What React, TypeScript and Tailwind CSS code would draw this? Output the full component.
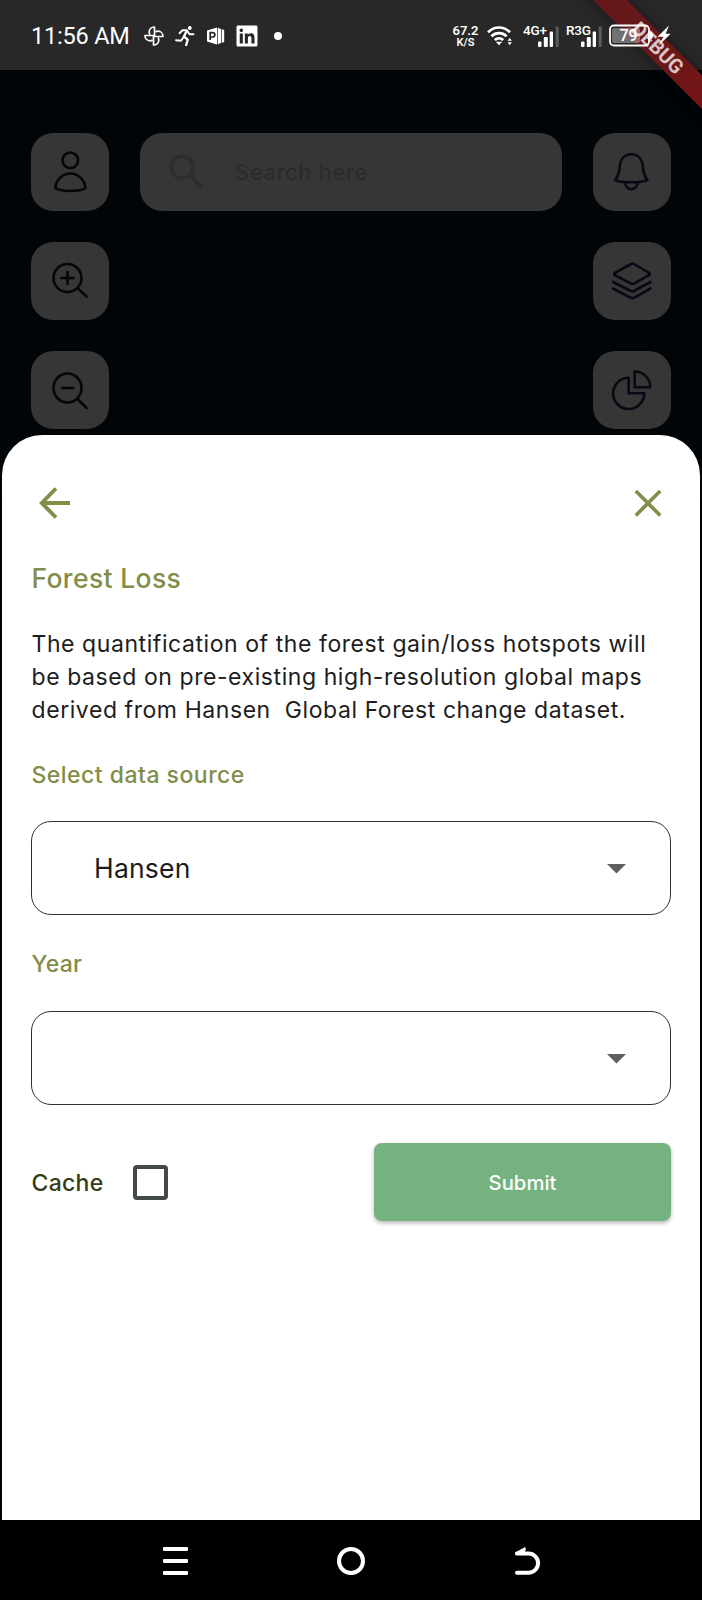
import React from "react";
import { FaLinkedin } from "react-icons/fa";

const INTER = "font-['Inter','Liberation_Sans',sans-serif]";
const ROBOTO = "font-['Roboto','Liberation_Sans',sans-serif]";

function PinwheelIcon() {
  return (
    <svg width="20" height="20" viewBox="0 0 20 20" fill="none" stroke="#fff" strokeWidth="1.700" strokeLinejoin="round">
      <path d="M10.500 10V1C7.500 1 5.200 3.200 5.200 6c0 1 .3 1.900.8 2.600" />
      <path d="M10 10.500h9c0-3-2.200-5.300-5-5.300-1 0-1.900.3-2.600.8" />
      <path d="M9.500 10v9c3 0 5.300-2.200 5.300-5 0-1-.3-1.900-.8-2.600" />
      <path d="M10 9.500H1c0 3 2.200 5.300 5 5.300 1 0 1.900-.3 2.600-.8" />
    </svg>
  );
}

function RunnerIcon() {
  return (
    <svg width="20" height="20" viewBox="0 0 20 20" fill="none" stroke="#fff" strokeWidth="1.900" strokeLinecap="round" strokeLinejoin="round">
      <circle cx="14.800" cy="2" r="1.900" fill="#fff" stroke="none" />
      <path d="M4.500 7.200 7.500 4.300h4.300l2.700 4h4" />
      <path d="M11.800 4.800 8.900 10.500l3.800 3.200-1.500 5.300" strokeWidth="2.300" />
      <path d="M8.300 11.500 6 14.800 1 14.300" />
    </svg>
  );
}

function SlidesIcon() {
  return (
    <svg width="18" height="18" viewBox="0 0 18 18" fill="#fff">
      <path d="M0 3.600 10 .4v17.200L0 14.400z" />
      <path d="M10.700 .8l3.300 1.200v14l-3.300 1.200zM14.700 2.300l2.500.7v12l-2.500.7z" />
      <path d="M3.200 13V5.600h2.300c3.200 0 3.200 4.400 0 4.400H3.400" fill="none" stroke="#282828" strokeWidth="1.700" />
    </svg>
  );
}

function WifiIcon() {
  return (
    <svg width="26" height="21" viewBox="0 0 26 21" fill="none" stroke="#fff" strokeWidth="2.700">
      <path d="M1 7.300C7.500.9 16.500.9 23 7.300" />
      <path d="M4.400 11.200c4.300-4.100 10.900-4.100 15.200 0" />
      <path d="M7.800 14.900c2.400-2.200 6-2.200 8.400 0" />
      <path d="M8.800 16.800h6.400L12 20.300z" fill="#fff" stroke="none" />
      <path d="M20.500 15.700 22.700 12.900 24.900 15.700zM20.500 17.300l2.200 2.900 2.200-2.900z" fill="#fff" stroke="none" />
    </svg>
  );
}

function Signal({ label }: { label: string }) {
  return (
    <div className="relative h-[22px] w-[36px]">
      <span className="absolute -top-[2px] left-0 text-[13.500px] leading-[15px] font-medium tracking-[-0.2px]">{label}</span>
      <svg className="absolute bottom-0 right-0" width="21" height="21" viewBox="0 0 21 21" fill="#fff">
        <rect x="0" y="15.500" width="3.500" height="5.500" rx="1" />
        <rect x="5.800" y="11" width="4" height="10" rx="1" />
        <rect x="11.700" y="5.500" width="3.300" height="15.500" rx="1" />
        <rect x="17.700" y="0.500" width="3" height="20.500" fill="#5c5c5c" />
      </svg>
    </div>
  );
}

function DebugRibbon() {
  return (
    <div className="pointer-events-none absolute right-0 top-0 size-[130px] overflow-hidden">
      <div className={`absolute left-[-14.500px] top-[35.500px] flex h-[23.500px] w-[200px] rotate-45 items-center justify-center bg-linear-to-r from-[#641719] via-[#681719] to-[#7c1414] text-[20px] leading-none font-bold text-white/75 shadow-[0_0_12px_rgba(0,0,0,0.5)] ${ROBOTO}`}>
        DEBUG
      </div>
    </div>
  );
}

function StatusBar() {
  return (
    <header className={`flex h-[70px] items-center justify-between bg-[#282828] pl-[31px] pr-[31px] pt-px text-white ${ROBOTO}`}>
      <div className="flex items-center">
        <span className="w-[113px] text-[23.500px] leading-[28px] tracking-[-0.2px]">11:56 AM</span>
        <PinwheelIcon />
        <span className="ml-[11px]"><RunnerIcon /></span>
        <span className="ml-[12px]"><SlidesIcon /></span>
        <FaLinkedin className="ml-[10px] size-[24px]" />
        <span className="ml-[15px] size-[8px] rounded-full bg-white" />
      </div>
      <DebugRibbon />
      <div className="relative flex items-center">
        <div className="w-[26px] text-center text-[13px] leading-[13px] font-semibold">
          <div>67.2</div>
          <div className="text-[11px] leading-[11px]">K/S</div>
        </div>
        <span className="ml-[8px]"><WifiIcon /></span>
        <div className="ml-[10.500px]"><Signal label="4G+" /></div>
        <div className="ml-[7px]"><Signal label="R3G" /></div>
        <svg className="ml-[6px]" width="63" height="24" viewBox="0 0 63 24">
          <rect x="2" y="1.500" width="39" height="20" rx="4" fill="none" stroke="#fff" strokeWidth="1.800" />
          <rect x="4" y="4" width="28" height="15" rx="2" fill="#fff" fillOpacity="0.350" />
          <path d="M42 7.500c4.200 1 4.200 7 0 8" fill="#fff" />
          <text x="11.500" y="17.300" fontSize="16" fontWeight="500" fill="#fff">79</text>
          <path d="M61 1.500 49.500 12.800h6L50 22 62.700 9.700h-5z" fill="#fff" />
        </svg>
      </div>
    </header>
  );
}

function MapButton({ children }: { children: React.ReactNode }) {
  return (
    <button className="flex size-[78px] shrink-0 items-center justify-center rounded-[22px] bg-[#363636]">
      <svg width="78" height="78" viewBox="0 0 78 78" fill="none" strokeWidth="2.600" strokeLinecap="round" strokeLinejoin="round">
        {children}
      </svg>
    </button>
  );
}

function MapControls() {
  return (
    <section className="flex flex-col gap-[31px] px-[31px] pt-[63px]">
      <div className="flex gap-[31px]">
        <MapButton>
          <g stroke="#060606">
            <circle cx="39.300" cy="27.300" r="7.800" />
            <path d="M24.300 55c1-8.500 7.500-14.500 15-14.500S53.500 46.500 54.500 55c-3 2-9 3-15.200 3s-12-1-15-3z" />
          </g>
        </MapButton>
        <div className="flex h-[78px] flex-1 items-center rounded-[22px] bg-[#363636] text-[#2a2a2a]">
          <svg className="ml-[29px]" width="35" height="36" viewBox="0 0 35 36" fill="none" stroke="#2d2d2d">
            <circle cx="13" cy="13" r="11" strokeWidth="3.200" />
            <path d="M21 21 33 33.500" strokeWidth="4" />
          </svg>
          <span className={`ml-[31px] text-[22px] tracking-[0.65px] ${INTER}`}>Search here</span>
        </div>
        <MapButton>
          <path stroke="#0a0814" d="M22 46.800c2.300-2.300 4-5.800 4.600-11.800.5-9 5-13.700 11.700-13.700S49.500 26 50 35c.6 6 2.200 9.500 4.500 11.800-3 1.600-9.200 2.500-16.200 2.500s-13.300-.9-16.300-2.500zM32 49.200c0 4 2.800 7 6.300 7s6.300-3 6.300-7" />
        </MapButton>
      </div>
      <div className="flex justify-between">
        <MapButton>
          <path stroke="#060606" d="M50.500 36a14 14 0 1 1-28 0 14 14 0 0 1 28 0zM46.500 46l9 8.500M30.500 36h12M36.500 30v12" />
        </MapButton>
        <MapButton>
          <path stroke="#0a0814" d="M38 22 22 30.800q-1.600 1.200 0 2.400L38 41.600q1.500.7 3 0l15-8.400q1.600-1.200 0-2.400L41 22q-1.500-.7-3 0zM20 40 38 49q1.500.7 3 0L57.500 40M20 46.500 38 55.800q1.500.7 3 0L57.500 46.500" />
        </MapButton>
      </div>
      <div className="flex justify-between">
        <MapButton>
          <path stroke="#060606" d="M50.500 37a14 14.500 0 1 1-28 0 14 14.500 0 0 1 28 0zM46.500 48l9 9M31 37h11.500" />
        </MapButton>
        <MapButton>
          <path stroke="#0a0814" d="M35.700 26.800a15.600 15.600 0 1 0 15.600 15.500H35.700zM41.700 20.500v15.700h15.600c0-8.700-7-15.700-15.600-15.700z" />
        </MapButton>
      </div>
    </section>
  );
}

function SelectBox({ value }: { value?: string }) {
  return (
    <div className={`flex h-[94px] items-center justify-between rounded-[20px] border border-[#303030] pl-[62px] pr-[44.500px] pt-[2px] text-[26.500px] tracking-[0.2px] text-[#1b1b1b] ${INTER}`}>
      <span>{value}</span>
      <svg width="19" height="10" viewBox="0 0 19 10" fill="#5f5f5f"><path d="M0 0h19L9.500 9.500z" /></svg>
    </div>
  );
}

function Sheet() {
  return (
    <main className={`absolute inset-x-[2px] top-[435px] flex h-[1085px] flex-col rounded-t-[40px] bg-white px-[29px] pt-[49px] ${INTER}`}>
      <div className="flex h-[38px] items-center justify-between pl-[8px] pr-[9.500px]">
        <svg width="32" height="32" viewBox="0 0 32 32" fill="none" stroke="#818d48" strokeWidth="3.900">
          <path d="M31 16H3M17 1.500 2.800 16 17 30.500" />
        </svg>
        <svg width="28" height="28" viewBox="0 0 28 28" fill="none" stroke="#818d48" strokeWidth="3.600">
          <path d="M1.800 2 26.200 26.400M26.200 2 1.800 26.400" />
        </svg>
      </div>
      <h1 className="mt-[38px] h-[34px] pl-[0.500px] pt-px text-[26.500px] leading-[34px] font-medium tracking-[0.35px] text-[#818d48]">Forest Loss</h1>
      <p className="mt-[34px] h-[99.600px] pl-[0.500px] text-[23px] leading-[33.200px] tracking-[0.570px] whitespace-pre text-[#1d1d1d]">
        {"The quantification of the forest gain/loss hotspots will\nbe based on pre-existing high-resolution global maps\nderived from Hansen  Global Forest change dataset."}
      </p>
      <h2 className="mt-[31.400px] h-[30px] pl-[0.500px] pt-px text-[23px] leading-[30px] font-medium tracking-[0.480px] text-[#818d48]">Select data source</h2>
      <div className="mt-[32px]"><SelectBox value="Hansen" /></div>
      <h2 className="mt-[33px] h-[30px] pl-[0.500px] pt-px text-[23px] leading-[30px] font-medium tracking-[0.2px] text-[#818d48]">Year</h2>
      <div className="mt-[33px]"><SelectBox /></div>
      <div className="mt-[38.500px] flex h-[78px] items-center">
        <span className="w-[102px] pl-[0.500px] pt-[2px] text-[23px] font-medium tracking-[0.3px] text-[#343c14]">Cache</span>
        <span className="size-[35px] rounded-[4px] border-4 border-[#434943]" />
        <button className="ml-auto h-[78px] w-[297px] rounded-[8px] bg-[#74b280] pt-px text-[20.300px] font-medium text-white shadow-[0_2px_4px_rgba(0,0,0,0.3)]">Submit</button>
      </div>
    </main>
  );
}

function NavBar() {
  return (
    <nav className="absolute inset-x-0 bottom-0 flex h-[80px] items-center justify-center gap-[148px] bg-black pt-[2px]">
      <svg width="28" height="28" viewBox="0 0 28 28" fill="#fff">
        <rect x="2" y="0" width="25" height="4" rx="1" />
        <rect x="2" y="12" width="25" height="4" rx="1" />
        <rect x="2" y="24" width="25" height="4" rx="1" />
      </svg>
      <svg width="28" height="28" viewBox="0 0 28 28" fill="none" stroke="#fff" strokeWidth="4">
        <circle cx="14" cy="14" r="12" />
      </svg>
      <svg width="28" height="28" viewBox="0 0 28 28" fill="none" stroke="#fff" strokeWidth="4" strokeLinecap="round">
        <path d="M4 6.500h11.500a9.500 9.500 0 0 1 0 19.200H4" />
        <path d="M12.200 0 2.200 5.500v2h8.500L12.800 2.500z" fill="#fff" stroke="none" />
      </svg>
    </nav>
  );
}

export default function App() {
  return (
    <div className="relative h-[1600px] w-[702px] overflow-hidden bg-[#020507]">
      <StatusBar />
      <MapControls />
      <div className="absolute inset-x-0 bottom-0 top-[500px] bg-black" />
      <Sheet />
      <NavBar />
    </div>
  );
}
